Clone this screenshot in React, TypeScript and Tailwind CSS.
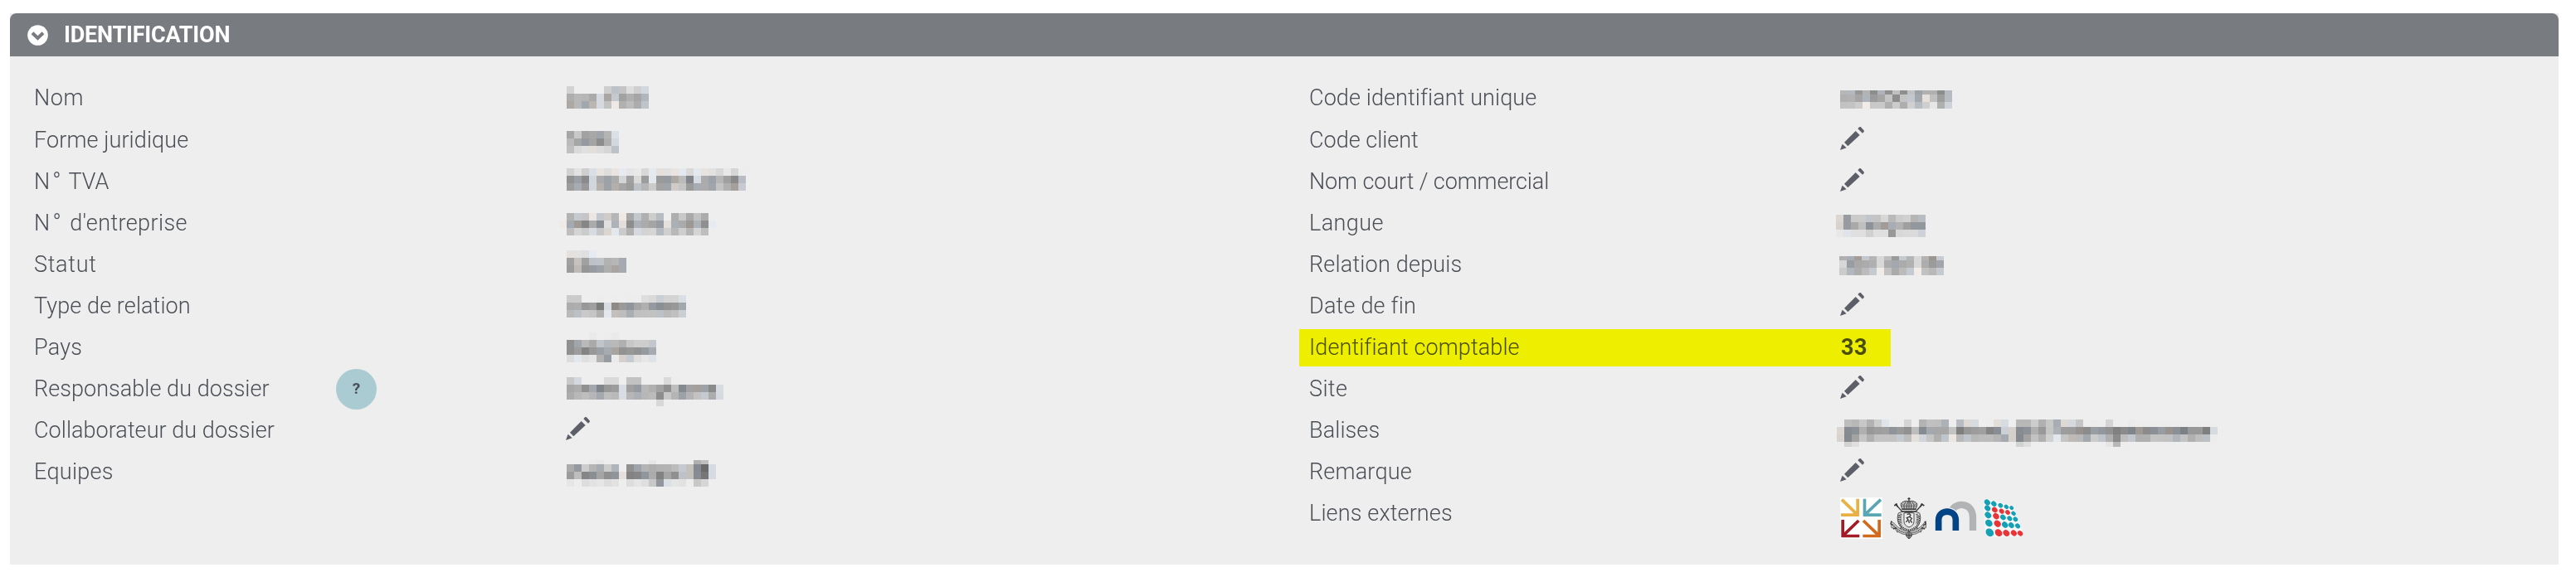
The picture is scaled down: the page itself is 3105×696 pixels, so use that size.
import type { ReactNode } from 'react'
import { clsx } from 'clsx'

type MosaicProps = {
  rows: string[]
  heights?: number[]
  className?: string
}

type Field = {
  label: ReactNode
  tracking?: string
  value?: ReactNode
  help?: boolean
  highlight?: boolean
}

const CELL = 9

// two hex digits of grey, then "b" for a cold tint or "w" for a warm one
const getCellColor = (cell: string) => {
  const grey = parseInt(cell.slice(0, 2), 16)
  const tint = cell[2]

  if (tint === 'b') return `rgb(${grey - 5}, ${grey}, ${grey + 6})`
  if (tint === 'w') return `rgb(${grey + 4}, ${grey - 2}, ${grey - 5})`
  return `rgb(${grey}, ${grey}, ${grey})`
}

const Mosaic = ({ rows, heights = [9, 9, 9], className }: MosaicProps) => {
  const cells = rows.map((row) => row.split(' '))
  const width = Math.max(...cells.map((row) => row.length)) * CELL
  const height = heights.reduce((total, h) => total + h, 0)

  return (
    <svg
      width={width}
      height={height}
      shapeRendering="crispEdges"
      className={clsx('block shrink-0', className)}
    >
      {cells.map((row, y) =>
        row.map((cell, x) =>
          cell === 'ee' ? null : (
            <rect
              key={`${x}-${y}`}
              x={x * CELL}
              y={heights.slice(0, y).reduce((total, h) => total + h, 0)}
              width={CELL}
              height={heights[y]}
              fill={getCellColor(cell)}
            />
          )
        )
      )}
    </svg>
  )
}

const Pencil = ({ className }: { className?: string }) => (
  <svg
    width="29"
    height="28"
    viewBox="0 0 87 84"
    fill="#5c5f68"
    className={clsx('mt-2 block shrink-0', className)}
  >
    <path d="M64 7l5-6q3-2 6 0l10 11q3 3 1 6l-5 5z" />
    <path d="M15 56L56 15l15 15L28 70z" />
    <path d="M0 84L8 62l15 14z" />
  </svg>
)

const ArrowsLogo = () => (
  <svg width="51" height="50" viewBox="0 0 153 150" className="shrink-0">
    <path fill="#fff" d="M0 0h153v150H0z" />
    <g fill="none" strokeWidth="11">
      <path stroke="#e9b043" d="M63.500 5V63.500H3M6 8L61 61" />
      <path stroke="#5ba6b4" d="M88.500 5V63.500H149M147 8L91 61" />
      <path stroke="#a31b25" d="M9.500 81V139.500H70M67 84L12 137" />
      <path stroke="#d2691b" d="M141.500 81V139.500H82M84 84L139 137" />
    </g>
  </svg>
)

const CrestLogo = () => (
  <svg
    width="44"
    height="50"
    viewBox="0 0 132 150"
    fill="none"
    stroke="#3a3a3a"
    strokeWidth="2.600"
    className="ml-[9px] shrink-0"
  >
    <path d="M69 0v14M64 5h10" strokeWidth="4" />
    <path fill="#bbb" d="M45 42Q34 24 45 17Q57 10 69 14Q81 10 93 17Q104 24 93 42z" />
    <path d="M52 41Q46 26 58 16M86 41Q92 26 80 16M69 14v27M61 41Q57 28 66 15M77 41Q81 28 72 15" />
    <path d="M43 43h52M44 50h50" strokeWidth="4" />
    <path d="M40 22l8 4M98 22l-8 4M42 31h54" strokeDasharray="4 3" />
    <path d="M20 24L112 126M118 24L26 126" strokeWidth="4" />
    <path d="M16 30l10-7M114 23l10 7M22 22l6 12M116 22l-6 12" strokeWidth="5" />
    <path fill="#ddd" d="M30 58Q40 49 69 52Q98 49 108 58Q116 88 98 108Q84 122 69 124Q54 122 40 108Q22 88 30 58z" />
    <path d="M34 64Q26 88 44 106Q56 116 69 118Q82 116 94 106Q112 88 104 64" strokeWidth="5" strokeDasharray="4 3" />
    <path d="M41 60Q34 76 42 96M97 60Q104 76 96 96" strokeWidth="7" strokeDasharray="3 3" />
    <path fill="#eee" d="M51 56h36v30q0 16-18 22q-18-6-18-22z" />
    <path d="M62 62l8-3 5 5-4 6 8 6-5 7 6 9M71 70l-10 4 5 7-8 8M68 83l2 10" strokeWidth="4" />
    <path d="M54 54h30" strokeWidth="5" strokeDasharray="4 2" />
    <path fill="#ccc" d="M4 86l12 8Q34 120 69 122Q104 120 122 94l10-8-2 24-12 3-3 8Q94 136 69 136Q44 136 23 121l-3-8-14-3z" strokeWidth="2" />
    <path d="M14 104Q36 128 69 129Q102 128 122 104" strokeWidth="5" strokeDasharray="3 3" />
    <path d="M6 86l-3 10 10 5M126 86l4 10-10 5M12 114l12-4M126 114l-12-4" strokeWidth="4" />
    <path fill="#999" d="M62 128l7-5 7 5 4 9-5 8-6 5-6-5-5-8z" />
    <path d="M69 124v24M59 137h20" strokeWidth="3" />
  </svg>
)

const ArchesLogo = () => (
  <svg
    width="51"
    height="50"
    viewBox="0 0 153 150"
    fill="none"
    className="ml-[10px] shrink-0"
  >
    <path
      stroke="#b2b3b5"
      strokeWidth="25"
      d="M138 120V72C138 20 82 16 64 44"
    />
    <path
      stroke="#eeeeee"
      strokeWidth="29"
      d="M14 122V82C14 40 76 40 76 82V122"
    />
    <path
      stroke="#004485"
      strokeWidth="23"
      d="M14 120V82C14 41 76 41 76 82V120"
    />
  </svg>
)

// x, y, radius, red
const dots: [number, number, number, boolean][] = [
  [16, 18, 10.5, false],
  [40, 23, 9.5, false],
  [64, 29, 8.5, false],
  [85, 34, 8, false],
  [104, 38, 7.5, false],
  [17, 39, 10.5, false],
  [43, 45, 10, true],
  [68, 50, 9, true],
  [90, 54, 8.5, true],
  [111, 58, 8, false],
  [19, 64, 11.5, false],
  [48, 68, 11, true],
  [73, 72, 10, false],
  [97, 76, 9, false],
  [118, 79, 8.5, false],
  [22, 93, 13, false],
  [53, 95, 12, true],
  [80, 99, 11, false],
  [103, 101, 10, false],
  [126, 103, 9, false],
  [25, 127, 14.5, false],
  [57, 128, 13, true],
  [85, 129, 11.5, true],
  [112, 129, 10.5, true],
  [135, 130, 9.5, true],
]

const DotsLogo = () => (
  <svg
    width="49"
    height="50"
    viewBox="0 0 147 150"
    className="ml-[7px] shrink-0"
  >
    <path
      d="M3 10L16 5L108 30L146 130L135 141L20 145L8 125z"
      fill="#f8f8f8"
    />
    {dots.map(([x, y, r, red]) => (
      <ellipse
        key={`${x}-${y}`}
        cx={x}
        cy={y}
        rx={r * 1.1}
        ry={r * 0.9}
        transform={`rotate(45 ${x} ${y})`}
        fill={red ? '#e93438' : '#14a1b6'}
      />
    ))}
  </svg>
)

const leftFields: Field[] = [
  {
    label: 'Nom',
    tracking: 'tracking-[0.6px]',
    value: (
      <Mosaic
        className="mt-[10px]"
        rows={[
          'd2 ee ee ee ee ce c2b c4 de d0 d8b',
          'ae b8 b6 aa dab a8w cab a2 b0 a6 b6b',
          'aaw b8 a8b b8w dab c2 ebw b0 bc ac c4b',
        ]}
      />
    ),
  },
  {
    label: 'Forme juridique',
    tracking: 'tracking-[0.1px]',
    value: (
      <Mosaic
        className="mt-[13px]"
        rows={[
          'a6 c8 a2 a8 a5b b4 e0b',
          'ba a6 9ab a4 8d ae d8b',
          'c0 da e0 e0w dc d6 c2b',
        ]}
      />
    ),
  },
  {
    label: (
      <>
        N<span className="px-[3px]">°</span> TVA
      </>
    ),
    value: (
      <Mosaic
        className="mt-2"
        rows={[
          'd2 e2 ce dfb e6w dd e6w ebb e5 e9 d8 eab e1w e1 e6w e9b d9 e9b e5w e1 d8 e8 d6 ed',
          '92 a0b 8a d6b ab a2b ab d4 a0 da 9c e8b 9a 9ab aaw bb 86b dcb ab a2b b6 a0 8a bdb',
          '9d acb 99 d6b b3w a2b b1w a5 9c c2b b5 cb a3 a5b cdw c5 9b acb ac a5b c3 b0 a2w cbb',
        ]}
      />
    ),
  },
  {
    label: (
      <>
        N<span className="px-[3px]">°</span> d'entreprise
      </>
    ),
    tracking: 'tracking-[0.4px]',
    value: (
      <Mosaic
        className="-ml-[9px] mt-3"
        rows={[
          'ee b3 cab c5 e8w c8b cdw b6 ebw a8 c8b b0 cd bcb ee ae c8 a9 c2 ac ee',
          'ecw aab 9cw 86 ab 8fb e0 b3b e0w 8d b2b ab a5 9db e2w b0b ab 9aw b3b 8f ebb',
          'ee be d4 cb dcb c8 d8w e8b cb b1 dab d3 d5 bbb cf b8 ce b5 d5 be ee',
        ]}
      />
    ),
  },
  {
    label: 'Statut',
    tracking: 'tracking-[0.7px]',
    value: (
      <Mosaic
        className="mt-[7px]"
        heights={[9, 9, 9, 8]}
        rows={[
          'e3w e2 df ebb ee ee ee ee',
          'a0 c4w a0 c2b c4b b2 b6 aab',
          '9c bcw 96 9bb a2b ae a6w aab',
          'ed ee ed ee ed ee ee ed',
        ]}
      />
    ),
  },
  {
    label: 'Type de relation',
    tracking: 'tracking-[0.1px]',
    value: (
      <Mosaic
        className="mt-[11px]"
        rows={[
          'cb cb ee ee ec ee ed ee ed ed de d9 cfb d4 d4 dfb',
          'ac ae 98 9f 7c dcb 8cw 9a 95b a6 b0 9ab 8fb 94 98 a8b',
          'b9 c1b ca c5 b0 e8b c1w bd aeb c0 c1 c2 c1b ba c0 cfb',
        ]}
      />
    ),
  },
  {
    label: 'Pays',
    tracking: 'tracking-[0.2px]',
    value: (
      <Mosaic
        className="mt-[6px]"
        heights={[9, 9, 9, 9]}
        rows={[
          'ee ee ee ea ee ed ea ee ee ee ee ee',
          '90 a6b b9 aa c5b b9b b9 b0 c7 ce cd c8b',
          '90 9d 84 98 a0b abb a6w 92 97 92 9bb abb',
          'dd e8b df e5 b2 9cb eb d2w cbb df e7 e3b',
        ]}
      />
    ),
  },
  {
    label: 'Responsable du dossier',
    tracking: 'tracking-[0.05px]',
    help: true,
    value: (
      <Mosaic
        className="mt-[10px]"
        heights={[9, 9, 9, 8]}
        rows={[
          'c8 d9b ee ee ee da da ee c2 c2 ee ee ee da ed ee ee ee ee ee ee',
          'a7 ad 90 a7b 85b 98 9d ddb a0 9ab b8 b0 a2 8f be 8ab a2 a1w a2b 8a dcb',
          'ac b8 be b6 a9b be b9 ddb b6 b0b b7 bb 8d c8 b5 a2b b4 c3 cab ac dab',
          'ee ee ee ee ee ee ee ee ee ee ee ee d8 ee ee ee ee ee ee ee ee',
        ]}
      />
    ),
  },
  {
    label: 'Collaborateur du dossier',
    tracking: 'tracking-[0.05px]',
    value: <Pencil className="-ml-px" />,
  },
  {
    label: 'Equipes',
    tracking: 'tracking-[0.3px]',
    value: (
      <Mosaic
        className="mt-[10px]"
        heights={[5, 9, 9, 9]}
        rows={[
          'ee ee ee eb e8 ed ee ee ee ee ee e6 ee ed ed ee ee b0 c0 ee',
          'ab 9ab cd b5 acb cc b5b ee 90 a4b b4 ae b2 b3 bc cab c2w 8ab 6a dbb',
          '9c be 86 8fb a5 90 95b e2w 83 86 96b ac 82 a6 90 c2b c2w 8cb 76 dbb',
          'e6 ed dd e2 e6 dd e2 ee dd e5 df c8 96b e0b e5 e2 ed c8 d6 ee',
        ]}
      />
    ),
  },
]

const rightFields: Field[] = [
  {
    label: 'Code identifiant unique',
    tracking: 'tracking-[0.1px]',
    value: (
      <Mosaic
        className="mt-[15px]"
        heights={[5, 9, 8]}
        rows={[
          'b7 b9b 98 b3 8d b3b 90 c0 8f c1 a2b b1 b0 8d bbb',
          'b0 b2 a5 b5b 9b a5 c4 8d c4 c8b a8b e2w c0 9e bcb',
          'c2 c3 cc eew c8 c9 b0 cb ae d0 bcb ce e6 b0 d3b',
        ]}
      />
    ),
  },
  { label: 'Code client', value: <Pencil /> },
  {
    label: 'Nom court / commercial',
    tracking: '-tracking-[0.1px]',
    value: <Pencil />,
  },
  {
    label: 'Langue',
    tracking: 'tracking-[0.4px]',
    value: (
      <Mosaic
        className="-ml-[5px] mt-[14px]"
        rows={[
          'd8w 9cb ca cb c6b c4 d7 b9 cc d0 b5 bdb',
          'd4w 9cb a9 c0 93b ac 9ew adb b2 9f 98b 98b',
          'e8 e4b df df d0 df df 98 d8 da da d2b',
        ]}
      />
    ),
  },
  {
    label: 'Relation depuis',
    tracking: 'tracking-[0.2px]',
    value: (
      <Mosaic
        className="-ml-px mt-[14px]"
        heights={[5, 9, 9]}
        rows={[
          'b0 aeb 9fw c8b b5 d8 bd 9a cab b5 d8 b3 98w ccb',
          'd7 9eb a9 ab b0 d8 ac a8b ab b1 d8 ad 9b a6b',
          'cb b7b ad bb cab eew c2 ab bb cab eew c1 b8 cab',
        ]}
      />
    ),
  },
  { label: 'Date de fin', tracking: 'tracking-[0.2px]', value: <Pencil /> },
  {
    label: 'Identifiant comptable',
    tracking: 'tracking-[0.1px]',
    highlight: true,
    value: <span className="pl-px font-bold tracking-[0.5px]">33</span>,
  },
  { label: 'Site', tracking: 'tracking-[0.4px]', value: <Pencil /> },
  {
    label: 'Balises',
    tracking: 'tracking-[0.1px]',
    value: (
      <Mosaic
        className="-ml-1 mt-[11px]"
        heights={[9, 9, 9, 6]}
        rows={[
          'ee bd b8 c8 b2 cd e5b ed ee d5 ee b3 c0 bf b2b ee bdb dbw dbb ee ed e0w dcb ee b8 b8 cd b0 c8 adb dbw d9b c5 ee ec ed d4 ee ee eb ed ed ed ed ed ed ed ed ed ed ee',
          'd8w 8cb 91b b0 98 9e a0 94b 9a 91 bd 8cb a9b a7 a7 c3 7f 97 9c a0 84 8eb d0b d2w 8cb 91b b0 99 c6 b2b 9d 9c 93w 8b 9eb 98b 92 80 8b 85b 9bw 8b 90b 9db 95w 90b 80b 98 98 7f dbb',
          'd5w 8ab a3 c5 b0 c3 c3 c2 cab bd e2w d5b c5 b0 c5b e8w b8 c5b b8 bc bc b5 aab d2w 8ab a3 c2 b0 d0 e8b c5 bcw b9 a8b cc c4b b0 8b be c8b b0 b0 c4 c3 c2 b6b c3 b0 bd c0b ec',
          'ee d2 df ee ee ee ee ee ee ee ee ee ee ee ee ee ee ee ee ee ee ee ee ee d2 de ee ee ee ee ee ee ee ee ee ee e6 b8 ed ee ee ee ee ee ee ee ee ee ee ee ee',
        ]}
      />
    ),
  },
  { label: 'Remarque', tracking: 'tracking-[0.2px]', value: <Pencil /> },
  {
    label: 'Liens externes',
    tracking: 'tracking-[0.15px]',
    value: (
      <div className="mt-[5px] flex">
        <ArrowsLogo />
        <CrestLogo />
        <ArchesLogo />
        <DotsLogo />
      </div>
    ),
  },
]

const FieldRow = ({
  label,
  tracking,
  value,
  help,
  highlight,
  labelWidth,
}: Field & { labelWidth: string }) => (
  <div className="relative flex h-[50px] items-start first:h-[51px]">
    <div className={clsx('flex shrink-0', labelWidth)}>
      <span
        className={clsx(
          'w-[364px] leading-[49px] whitespace-nowrap',
          tracking
        )}
      >
        {label}
      </span>
      {help && (
        <span className="size-[49px] rounded-full bg-[#aacbd2] text-center text-[19px] leading-[48px] font-bold">
          ?
        </span>
      )}
    </div>
    <div className="leading-[49px]">{value}</div>
    {highlight && (
      <div className="absolute top-0.5 -left-3 h-[45px] w-[713px] bg-[#ffff00] mix-blend-multiply" />
    )}
  </div>
)

export default function App() {
  return (
    <div className="h-[696px] w-[3105px] bg-white pt-4 pl-3 font-['Roboto',sans-serif] text-[27px] font-light text-[#4a4e55]">
      <section className="h-[665px] w-[3072px] bg-[#eeeeee]">
        <header className="flex h-[52px] items-center rounded-t-lg bg-[#787b80] pl-[21px] text-white">
          <svg width="25" height="25" viewBox="0 0 25 25" className="shrink-0">
            <circle cx="12.5" cy="12.5" r="12.3" fill="#fff" />
            <path
              d="M6 9.700l6.500 6.300 6.500-6.300"
              fill="none"
              stroke="#787b80"
              strokeWidth="4"
            />
          </svg>
          <h2 className="ml-[19px] font-bold tracking-[-0.2px]">
            IDENTIFICATION
          </h2>
        </header>
        <div className="flex pt-[26px] pl-[29px]">
          <div className="w-[1537px] shrink-0">
            {leftFields.map((field, index) => (
              <FieldRow key={index} labelWidth="w-[642px]" {...field} />
            ))}
          </div>
          <div className="grow">
            {rightFields.map((field, index) => (
              <FieldRow key={index} labelWidth="w-[640px]" {...field} />
            ))}
          </div>
        </div>
      </section>
    </div>
  )
}
